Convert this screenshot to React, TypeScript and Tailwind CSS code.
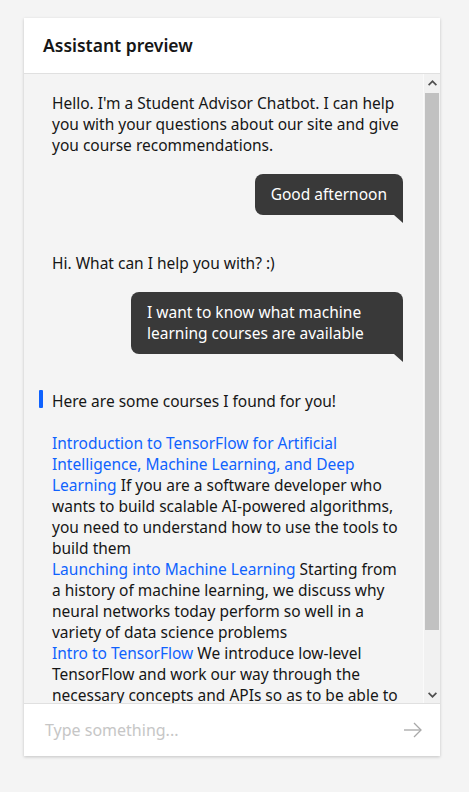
import React from "react";

type Course = { title: string; text: string };

const courses: Course[] = [
  {
    title: "Introduction to TensorFlow for Artificial Intelligence, Machine Learning, and Deep Learning",
    text: "If you are a software developer who wants to build scalable AI-powered algorithms, you need to understand how to use the tools to build them",
  },
  {
    title: "Launching into Machine Learning",
    text: "Starting from a history of machine learning, we discuss why neural networks today perform so well in a variety of data science problems",
  },
  {
    title: "Intro to TensorFlow",
    text: "We introduce low-level TensorFlow and work our way through the necessary concepts and APIs so as to be able to write distributed machine learning models",
  },
];

function BotMessage({ children, active }: { children: React.ReactNode; active?: boolean }) {
  return (
    <div className="relative text-[#161616]">
      {active && <span className="absolute -left-[13px] top-[-1px] h-[18px] w-[4px] rounded-[1px] bg-[#0f62fe]" />}
      {children}
    </div>
  );
}

function UserMessage({ children }: { children: React.ReactNode }) {
  return (
    <div className="flex justify-end">
      <div className="relative max-w-[272px] rounded-[8px] rounded-br-none bg-[#393939] px-[16px] py-[10px] text-white">
        {children}
        {/* bubble tail */}
        <span className="absolute right-0 top-full h-[8px] w-[9px] bg-[#393939] [clip-path:polygon(0_0,100%_0,100%_100%)]" />
      </div>
    </div>
  );
}

function SendIcon() {
  return (
    <svg width="20" height="16" viewBox="0 0 20 16" fill="none" stroke="#a8a8a8" strokeWidth="1.3">
      <path d="M1 8h17" />
      <path d="M11 1l7 7-7 7" />
    </svg>
  );
}

function Chevron({ up }: { up?: boolean }) {
  return (
    <svg width="9" height="6" viewBox="0 0 9 6" fill="#505050">
      {up ? <path d="M0 4.5L4.5 0 9 4.5 7.8 5.7 4.5 2.4 1.2 5.7z" /> : <path d="M0 1.5L4.5 6 9 1.5 7.8 0.3 4.5 3.6 1.2 0.3z" />}
    </svg>
  );
}

export default function App() {
  return (
    <div
      className="min-h-screen bg-[#f4f4f4] px-[24px] pt-[18px]"
      style={{ fontFamily: '"Noto Sans", "Open Sans", sans-serif' }}
    >
      <div className="flex h-[738px] w-[416px] flex-col bg-white shadow-[0_1px_3px_rgba(0,0,0,0.2)]">
        {/* Header */}
        <div className="flex h-[56px] shrink-0 items-center border-b border-[#e0e0e0] px-[19px]">
          <h2 className="text-[17.5px] font-semibold text-[#161616]">Assistant preview</h2>
        </div>

        {/* Messages + scrollbar */}
        <div className="flex min-h-0 flex-1 bg-[#f4f4f4]">
          <div className="min-w-0 flex-1 overflow-hidden">
            <div className="flex flex-col pb-[20px] pl-[28px] pr-[20px] pt-[19px] text-[15.5px] leading-[21px]">
              <BotMessage>
                <div className="pr-[4px]">
                  Hello. I'm a Student Advisor Chatbot. I can help you with your questions about our site and give you course recommendations.
                </div>
              </BotMessage>
              <div className="mt-[18px]">
                <UserMessage>Good afternoon</UserMessage>
              </div>
              <div className="mt-[38px]">
                <BotMessage>Hi. What can I help you with? :)</BotMessage>
              </div>
              <div className="mt-[18px]">
                <UserMessage>I want to know what machine learning courses are available</UserMessage>
              </div>
              <div className="mt-[37px]">
                <BotMessage active>
                  <div className="pr-[4px]">
                    <p>Here are some courses I found for you!</p>
                    <br />
                    {courses.map((c) => (
                      <p key={c.title}>
                        <a className="text-[#0f62fe]">{c.title}</a> {c.text}
                      </p>
                    ))}
                  </div>
                </BotMessage>
              </div>
            </div>
          </div>
          {/* scrollbar */}
          <div className="flex w-[17px] shrink-0 flex-col border-l border-[#fafafa] bg-[#f1f1f1]">
            <div className="flex h-[17px] items-center justify-center">
              <Chevron up />
            </div>
            <div className="mx-[1px] mt-[2px] h-[537px] bg-[#c1c1c1]" />
            <div className="flex-1" />
            <div className="flex h-[17px] items-center justify-center">
              <Chevron />
            </div>
          </div>
        </div>

        {/* Input */}
        <div className="flex h-[53px] shrink-0 items-center justify-between border-t border-[#e0e0e0] bg-white pl-[21px] pr-[17px]">
          <span className="text-[16px] text-[#c6c6c6]">Type something...</span>
          <SendIcon />
        </div>
      </div>
    </div>
  );
}
